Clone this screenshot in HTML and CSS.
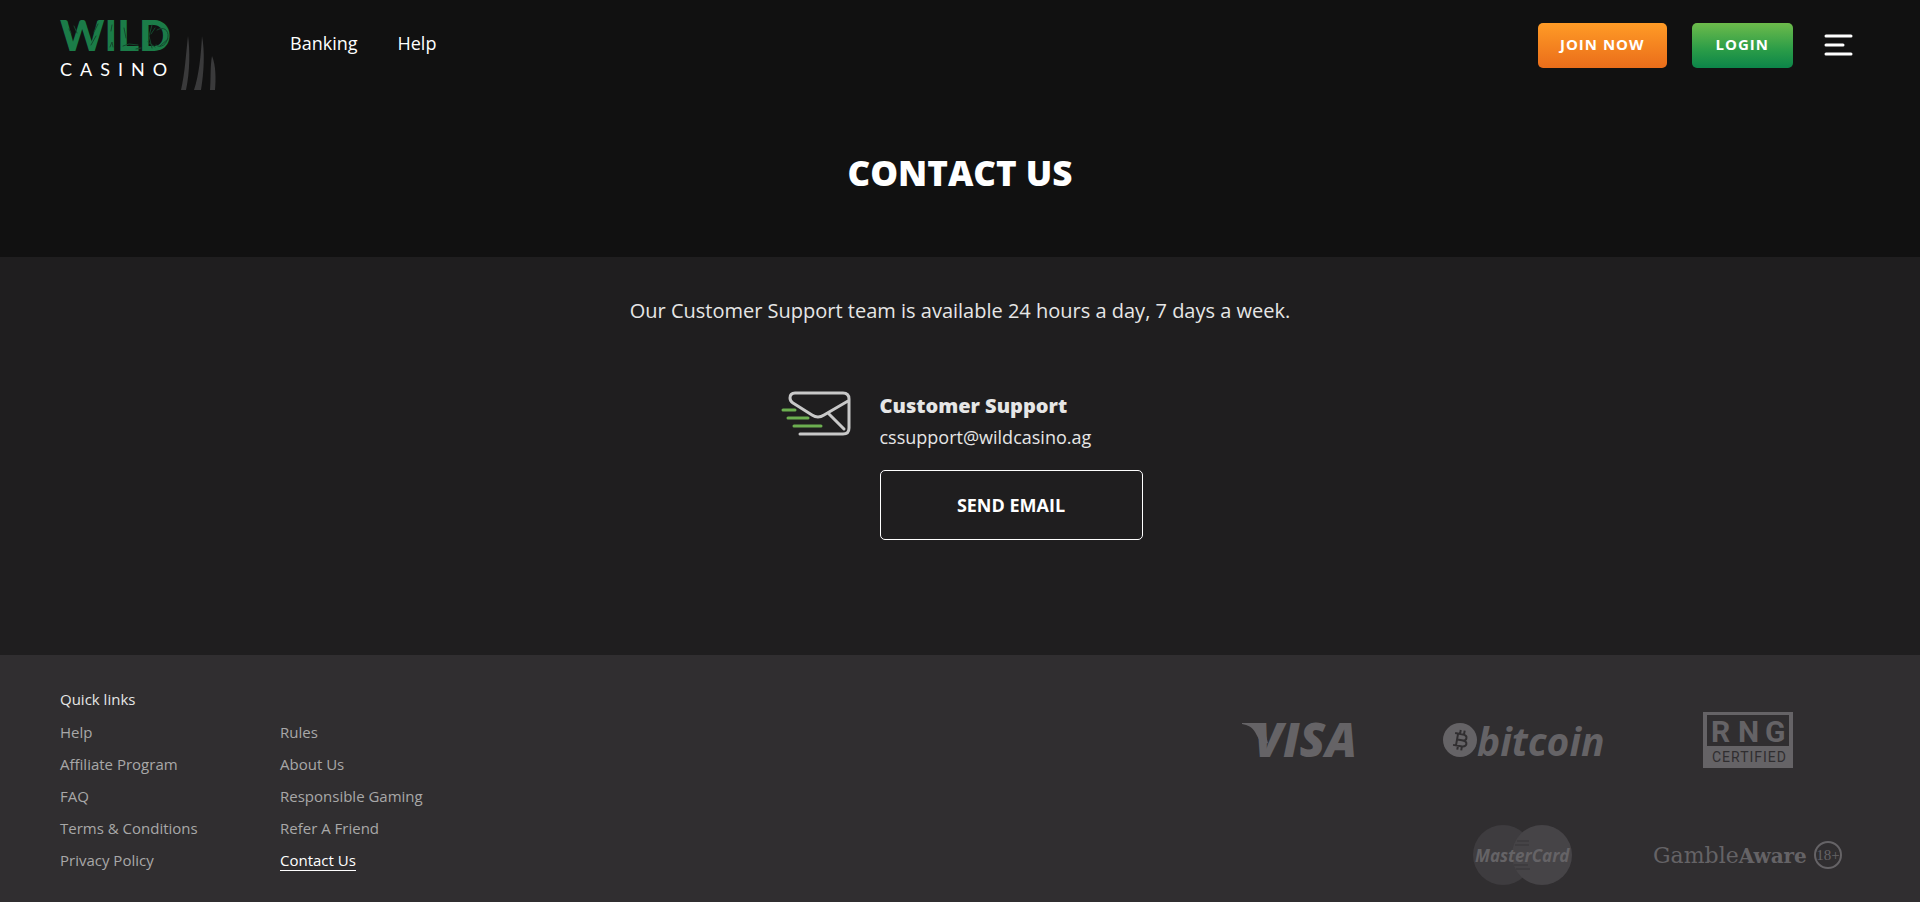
FILE: index.html
```html
<!DOCTYPE html>
<html lang="en">
<head>
<meta charset="utf-8">
<meta name="viewport" content="width=device-width, initial-scale=1">
<title>Contact Us | Wild Casino</title>
<link rel="stylesheet" href="styles.css">
</head>
<body>
<div class="top">
  <header class="header">
    <a class="brand" href="#" aria-label="Wild Casino">
      <svg width="158" height="76" viewBox="0 0 158 76">
        <text class="brand-wild" x="0" y="35">WILD</text>
        <g class="brand-scratches">
          <path d="M14 10l3 7M31 29l5-9M38 8l-4 8M9 13l2 4M50 31l2-5 1 5M52 9l-1 6M64 12l2 10M63 30l6-2 9 1M76 33l5-1M92 9l-3 11 3 12M97 14c6-4 12 0 11 7s-7 12-12 8M88 26l7 5M95 12l-4 6M100 30l8-7"/>
        </g>
        <text class="brand-casino" x="0" y="60">CASINO</text>
        <path class="brand-claws" d="M128 20c2 14 2 36-2 54h-5c4-17 5-37 7-54zM142 20c3 16 2 36-1 54h-7c5-15 7-35 8-54zM152 40c4 9 4 24 3 34h-5c1-10 0-24 2-34z"/>
      </svg>
    </a>
    <nav class="nav" aria-label="Main">
      <a href="#">Banking</a>
      <a href="#">Help</a>
    </nav>
    <div class="actions">
      <button class="btn btn-join" type="button">JOIN NOW</button>
      <button class="btn btn-login" type="button">LOGIN</button>
      <button class="menu" type="button" aria-label="Menu">
        <svg width="28" height="22" viewBox="0 0 28 22"><path d="M2 2h25M2 11h17M2 20h25"/></svg>
      </button>
    </div>
  </header>
  <h1 class="title">CONTACT US</h1>
</div>

<main class="main">
  <p class="lead">Our Customer Support team is available 24 hours a day, 7 days a week.</p>
  <section class="support">
    <svg class="mail" width="70" height="48" viewBox="0 0 70 48" aria-hidden="true">
      <path class="mail-line" d="M18 43h43q6 0 6-6V8q0-6-6-6H13Q8 2 8 7q0 3 3 5l19 12q6 4 12 0L66 10M47 23l15 15"/>
      <path class="mail-speed" d="M1 19h12M6 27h20M12 35h27"/>
    </svg>
    <div class="support-body">
      <h2 class="support-title">Customer Support</h2>
      <p class="support-mail">cssupport@wildcasino.ag</p>
      <a class="send" href="mailto:cssupport@wildcasino.ag">SEND EMAIL</a>
    </div>
  </section>
</main>

<footer class="footer">
  <nav class="links" aria-labelledby="quick">
    <h3 class="links-title" id="quick">Quick links</h3>
    <div class="links-cols">
      <ul>
        <li><a href="#">Help</a></li>
        <li><a href="#">Affiliate Program</a></li>
        <li><a href="#">FAQ</a></li>
        <li><a href="#">Terms &amp; Conditions</a></li>
        <li><a href="#">Privacy Policy</a></li>
      </ul>
      <ul>
        <li><a href="#">Rules</a></li>
        <li><a href="#">About Us</a></li>
        <li><a href="#">Responsible Gaming</a></li>
        <li><a href="#">Refer A Friend</a></li>
        <li><a class="current" href="#" aria-current="page">Contact Us</a></li>
      </ul>
    </div>
  </nav>
  <div class="partners">
    <svg width="118" height="36" viewBox="0 0 118 36" role="img" aria-label="Visa">
      <path d="M3 1h16c4 0 5 2 6 6l4 14-6 2-7-13C13 5 9 3 3 2z"/>
      <text class="logo-visa" x="15" y="35">VISA</text>
    </svg>
    <svg width="166" height="40" viewBox="0 0 166 40" role="img" aria-label="bitcoin">
      <circle cx="20" cy="20" r="17"/>
      <g class="coin" transform="rotate(10 20 20)">
        <path d="M14 14h8q4 0 4 3t-4 3h-5M22 20q5 0 5 3t-5 3h-8M17 14v12M19 10v4M23 10v4M19 26v4M23 26v4"/>
      </g>
      <text class="logo-bitcoin" x="37" y="36">bitcoin</text>
    </svg>
    <svg width="90" height="56" viewBox="0 0 90 56" role="img" aria-label="RNG Certified">
      <path fill-rule="evenodd" d="M0 0h90v56H0zM4 3h82v31H4z"/>
      <text class="logo-rng" x="8 35 62" y="30">RNG</text>
      <text class="logo-cert" x="9" y="50">CERTIFIED</text>
    </svg>
    <svg class="mc" width="104" height="60" viewBox="0 0 104 60" role="img" aria-label="MasterCard">
      <circle class="mc-left" cx="32" cy="30" r="30"/>
      <circle class="mc-right" cx="71" cy="30" r="30"/>
      <path class="mc-bars" d="M46 16h12M44 20h14M43 40h14M45 44h14"/>
      <text class="logo-mc" x="4" y="37">MasterCard</text>
    </svg>
    <svg width="190" height="30" viewBox="0 0 190 30" role="img" aria-label="GambleAware 18+">
      <text class="logo-ga" x="0" y="23">Gamble<tspan class="logo-ga-bold">Aware</tspan></text>
      <circle class="age-ring" cx="175" cy="15" r="13"/>
      <text class="logo-age" x="175" y="20">18+</text>
    </svg>
  </div>
</footer>
</body>
</html>
```
FILE: styles.css
```css
* { box-sizing: border-box; }

body {
  margin: 0;
  min-height: 100vh;
  display: flex;
  flex-direction: column;
  background: #1f1e1f;
  color: #fff;
  font-family: "Open Sans", "Liberation Sans", sans-serif;
}

a { color: inherit; text-decoration: none; }
h1, h2, h3, p, ul { margin: 0; padding: 0; }
ul { list-style: none; }
svg { display: block; overflow: visible; }
button { font-family: inherit; border: 0; cursor: pointer; }

.top { background: #111; padding-bottom: 60px; }

.header {
  display: flex;
  align-items: flex-start;
  padding: 16px 60px 0;
}

.brand-wild { font: 900 42px Lato, sans-serif; fill: #1b7c48; }
.brand-scratches { fill: none; stroke: #14482d; stroke-width: 1; stroke-linecap: round; }
.brand-casino { font: 400 18px Lato, sans-serif; letter-spacing: 8px; fill: #fff; }
.brand-claws { fill: #3a3a3b; }

.nav { display: flex; gap: 40px; margin-left: 72px; padding-top: 14px; font-size: 18px; line-height: 26px; }

.actions { display: flex; align-items: center; margin-left: auto; padding-top: 7px; }

.btn {
  height: 45px;
  padding: 0 22px 3px;
  border-radius: 5px;
  color: #fff;
  font-size: 15px;
  font-weight: 700;
  letter-spacing: 1px;
}
.btn-join { background: linear-gradient(#ff9b26, #ea6d1a); }
.btn-login { margin-left: 25px; padding: 0 24px 3px; background: linear-gradient(#6dbb4b, #2a9c48 60%, #0c8549); }

.menu { margin: 0 8px 0 31px; padding: 0 0 2px; background: none; }
.menu path { stroke: #fff; stroke-width: 3; stroke-linecap: round; }

.title { margin-top: 56px; text-align: center; font-size: 35px; font-weight: 800; line-height: 49px; }

.main {
  display: flex;
  flex-direction: column;
  align-items: center;
  padding: 40px 20px 115px;
  color: #e6e6e6;
}

.lead { font-size: 20px; line-height: 28px; }

.support { display: flex; gap: 28px; margin-top: 66px; padding-left: 4px; }
.mail { fill: none; stroke-linecap: round; stroke-linejoin: round; }
.mail-line { stroke: #c8c8c8; stroke-width: 3; }
.mail-speed { stroke: #6cae50; stroke-width: 3; }
.support-title { font-size: 20px; font-weight: 800; line-height: 30px; }
.support-mail { font-size: 18px; line-height: 32px; }
.send {
  display: flex;
  align-items: center;
  justify-content: center;
  width: 263px;
  height: 70px;
  margin-top: 17px;
  border: 1px solid #fff;
  border-radius: 5px;
  color: #fff;
  font-size: 18px;
  font-weight: 700;
}

.footer {
  flex: 1;
  display: flex;
  justify-content: space-between;
  padding: 27px 60px 16px;
  background: #302e30;
}

.links { font-size: 15px; color: #a8a8a8; }
.links-title { color: #e6e6e6; font-size: 15px; font-weight: 400; line-height: 34px; }
.links-cols { display: grid; grid-template-columns: 220px auto; }
.links li { padding: 4px 0; line-height: 24px; }
.links .current { color: #fff; border-bottom: 1px solid #fff; }

.partners {
  display: grid;
  grid-template-columns: repeat(3, 225px);
  grid-auto-rows: 115px;
  place-items: center;
  fill: #656366;
}
.mc { grid-column: 2; }
.mc-left { fill: #3e3c3f; }
.mc-right { fill: #464447; }
.mc-bars { stroke: #3e3c3f; stroke-width: 2; }
.coin { fill: none; stroke: #302e30; stroke-width: 2; }
.logo-visa { font: italic 800 47px "Open Sans", sans-serif; }
.logo-bitcoin { font: italic 700 39px "Open Sans", sans-serif; }
.logo-rng { font: 700 30px Roboto, sans-serif; }
.logo-cert { font: 400 14px Roboto, sans-serif; letter-spacing: 1px; fill: #302e30; }
.logo-mc { font: italic 700 17px "Open Sans", sans-serif; }
.logo-ga { font: 400 22px "DejaVu Serif", serif; }
.logo-ga-bold { font-weight: 700; font-size: 20px; }
.logo-age { font: 400 15px "Liberation Serif", serif; text-anchor: middle; }
.age-ring { fill: none; stroke: #656366; stroke-width: 2; }
```
